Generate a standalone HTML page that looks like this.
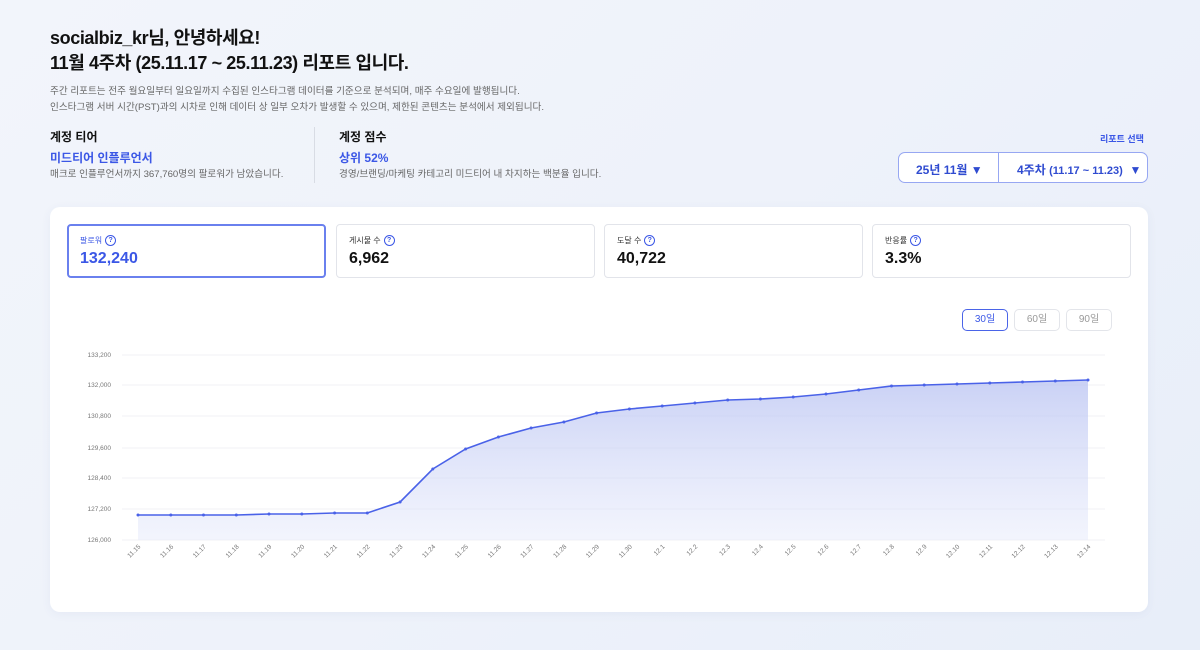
<!DOCTYPE html>
<html><head><meta charset="utf-8"><style>
*{margin:0;padding:0;box-sizing:border-box}
body{width:1200px;height:650px;overflow:hidden;background:linear-gradient(135deg,#f2f5fb 0%,#eef2fa 50%,#e8eef9 100%);font-family:"Liberation Sans","Noto Sans CJK KR",sans-serif;position:relative;color:#111}
.a{position:absolute;white-space:nowrap}
h1{font-size:18px;font-weight:700;line-height:25px;letter-spacing:-0.4px}
.desc{font-size:9.6px;color:#666;line-height:16px}
.lab{font-size:12px;font-weight:700}
.blue{color:#3b57e6}
.card{position:absolute;left:50px;top:207px;width:1098px;height:405px;background:#fff;border-radius:10px;box-shadow:0 2px 10px rgba(60,80,150,0.06)}
.m{position:absolute;top:224px;width:259px;height:54px;border:1px solid #e2e4ea;border-radius:4px;background:#fff}
.m .t{position:absolute;left:12px;top:10px;font-size:8px;color:#333}
.m .q{display:inline-block;width:11px;height:11px;border:1.3px solid #3b57e6;border-radius:50%;font-size:7px;color:#3b57e6;text-align:center;line-height:9px;vertical-align:middle;margin-left:3px;font-weight:700}
.m .v{position:absolute;left:12px;top:25px;font-size:16px;font-weight:700}
.sel{position:absolute;left:898px;top:152px;width:250px;height:31px;border:1px solid #97a7f2;border-radius:7px;background:#fff;font-size:12px;font-weight:700;color:#2f4bd0}
.btn{position:absolute;top:309px;width:46px;height:22px;border:1px solid #e3e5ea;border-radius:5px;font-size:10px;color:#999;text-align:center;line-height:20px;background:#fff}
</style></head><body>
<div class="a" style="left:50px;top:26px"><h1>socialbiz_kr님, 안녕하세요!<br>11월 4주차 (25.11.17 ~ 25.11.23) 리포트 입니다.</h1></div>
<div class="a desc" style="left:50px;top:84px">주간 리포트는 전주 월요일부터 일요일까지 수집된 인스타그램 데이터를 기준으로 분석되며, 매주 수요일에 발행됩니다.<br>인스타그램 서버 시간(PST)과의 시차로 인해 데이터 상 일부 오차가 발생할 수 있으며, 제한된 콘텐츠는 분석에서 제외됩니다.</div>
<div class="a lab" style="left:50px;top:128px">계정 티어</div>
<div class="a lab blue" style="left:50px;top:149px">미드티어 인플루언서</div>
<div class="a desc" style="left:50px;top:167px">매크로 인플루언서까지 367,760명의 팔로워가 남았습니다.</div>
<div class="a" style="left:314px;top:127px;width:1px;height:56px;background:#d8dce4"></div>
<div class="a lab" style="left:339px;top:128px">계정 점수</div>
<div class="a lab blue" style="left:339px;top:149px">상위 52%</div>
<div class="a desc" style="left:339px;top:167px">경영/브랜딩/마케팅 카테고리 미드티어 내 차지하는 백분율 입니다.</div>
<div class="a" style="left:1100px;top:132px;font-size:9px;font-weight:700;color:#3b57e6">리포트 선택</div>
<div class="sel"><span class="a" style="left:17px;top:8px">25년 11월 ▼</span><div class="a" style="left:99px;top:0;width:1px;height:29px;background:#97a7f2"></div><span class="a" style="left:118px;top:8px">4주차 <span style="font-size:11px">(11.17 ~ 11.23)</span> &nbsp;▼</span></div>
<div class="card"></div>
<div class="m" style="left:67px;border:2px solid #6a80ee"><div class="t" style="left:11px;top:9px;color:#3b57e6">팔로워<span class="q">?</span></div><div class="v blue" style="left:11px;top:24px">132,240</div></div>
<div class="m" style="left:336px"><div class="t">게시물 수<span class="q">?</span></div><div class="v">6,962</div></div>
<div class="m" style="left:604px"><div class="t">도달 수<span class="q">?</span></div><div class="v">40,722</div></div>
<div class="m" style="left:872px"><div class="t">반응률<span class="q">?</span></div><div class="v">3.3%</div></div>
<div class="btn" style="left:962px;border:1.5px solid #4a64e8;color:#3b57e6">30일</div>
<div class="btn" style="left:1014px">60일</div>
<div class="btn" style="left:1066px">90일</div>
<svg class="a" style="left:0;top:0" width="1200" height="650">
<defs><linearGradient id="g" x1="0" y1="0" x2="0" y2="1"><stop offset="0" stop-color="#b8c2f2" stop-opacity="0.75"/><stop offset="1" stop-color="#e6eafb" stop-opacity="0.5"/></linearGradient></defs>
<g stroke="#f0f1f4" stroke-width="1">
<line x1="122" y1="355" x2="1105" y2="355"/><line x1="122" y1="385" x2="1105" y2="385"/><line x1="122" y1="416" x2="1105" y2="416"/><line x1="122" y1="448" x2="1105" y2="448"/><line x1="122" y1="478" x2="1105" y2="478"/><line x1="122" y1="509" x2="1105" y2="509"/><line x1="122" y1="540" x2="1105" y2="540"/></g>
<g font-size="6.5" fill="#777" text-anchor="end" font-family="Liberation Sans,sans-serif">
<text x="111" y="357">133,200</text><text x="111" y="387">132,000</text><text x="111" y="418">130,800</text><text x="111" y="450">129,600</text><text x="111" y="480">128,400</text><text x="111" y="511">127,200</text><text x="111" y="542">126,000</text></g>
<path fill="url(#g)" d="M138,515 L170.8,515 203.5,515 236.3,515 269,514 301.8,514 334.6,513 367.3,513 400.1,502 432.8,469 465.6,449 498.4,437 531.1,428 563.9,422 596.6,413 629.4,409 662.2,406 694.9,403 727.7,400 760.4,399 793.2,397 826,394 858.7,390 891.5,386 924.2,385 957,384 989.8,383 1022.5,382 1055.3,381 1088,380 L1088,540 L138,540 Z"/>
<polyline fill="none" stroke="#4a62e8" stroke-width="1.6" points="138,515 170.8,515 203.5,515 236.3,515 269,514 301.8,514 334.6,513 367.3,513 400.1,502 432.8,469 465.6,449 498.4,437 531.1,428 563.9,422 596.6,413 629.4,409 662.2,406 694.9,403 727.7,400 760.4,399 793.2,397 826,394 858.7,390 891.5,386 924.2,385 957,384 989.8,383 1022.5,382 1055.3,381 1088,380"/>
<g fill="#4a62e8"><circle cx="138" cy="515" r="1.5"/><circle cx="170.8" cy="515" r="1.5"/><circle cx="203.5" cy="515" r="1.5"/><circle cx="236.3" cy="515" r="1.5"/><circle cx="269" cy="514" r="1.5"/><circle cx="301.8" cy="514" r="1.5"/><circle cx="334.6" cy="513" r="1.5"/><circle cx="367.3" cy="513" r="1.5"/><circle cx="400.1" cy="502" r="1.5"/><circle cx="432.8" cy="469" r="1.5"/><circle cx="465.6" cy="449" r="1.5"/><circle cx="498.4" cy="437" r="1.5"/><circle cx="531.1" cy="428" r="1.5"/><circle cx="563.9" cy="422" r="1.5"/><circle cx="596.6" cy="413" r="1.5"/><circle cx="629.4" cy="409" r="1.5"/><circle cx="662.2" cy="406" r="1.5"/><circle cx="694.9" cy="403" r="1.5"/><circle cx="727.7" cy="400" r="1.5"/><circle cx="760.4" cy="399" r="1.5"/><circle cx="793.2" cy="397" r="1.5"/><circle cx="826" cy="394" r="1.5"/><circle cx="858.7" cy="390" r="1.5"/><circle cx="891.5" cy="386" r="1.5"/><circle cx="924.2" cy="385" r="1.5"/><circle cx="957" cy="384" r="1.5"/><circle cx="989.8" cy="383" r="1.5"/><circle cx="1022.5" cy="382" r="1.5"/><circle cx="1055.3" cy="381" r="1.5"/><circle cx="1088" cy="380" r="1.5"/></g>
<g font-size="6.5" fill="#777" text-anchor="end" font-family="Liberation Sans,sans-serif">
<text transform="translate(141,547) rotate(-45)">11.15</text><text transform="translate(173.8,547) rotate(-45)">11.16</text><text transform="translate(206.5,547) rotate(-45)">11.17</text><text transform="translate(239.3,547) rotate(-45)">11.18</text><text transform="translate(272,547) rotate(-45)">11.19</text><text transform="translate(304.8,547) rotate(-45)">11.20</text><text transform="translate(337.6,547) rotate(-45)">11.21</text><text transform="translate(370.3,547) rotate(-45)">11.22</text><text transform="translate(403.1,547) rotate(-45)">11.23</text><text transform="translate(435.8,547) rotate(-45)">11.24</text><text transform="translate(468.6,547) rotate(-45)">11.25</text><text transform="translate(501.4,547) rotate(-45)">11.26</text><text transform="translate(534.1,547) rotate(-45)">11.27</text><text transform="translate(566.9,547) rotate(-45)">11.28</text><text transform="translate(599.6,547) rotate(-45)">11.29</text><text transform="translate(632.4,547) rotate(-45)">11.30</text><text transform="translate(665.2,547) rotate(-45)">12.1</text><text transform="translate(697.9,547) rotate(-45)">12.2</text><text transform="translate(730.7,547) rotate(-45)">12.3</text><text transform="translate(763.4,547) rotate(-45)">12.4</text><text transform="translate(796.2,547) rotate(-45)">12.5</text><text transform="translate(829,547) rotate(-45)">12.6</text><text transform="translate(861.7,547) rotate(-45)">12.7</text><text transform="translate(894.5,547) rotate(-45)">12.8</text><text transform="translate(927.2,547) rotate(-45)">12.9</text><text transform="translate(960,547) rotate(-45)">12.10</text><text transform="translate(992.8,547) rotate(-45)">12.11</text><text transform="translate(1025.5,547) rotate(-45)">12.12</text><text transform="translate(1058.3,547) rotate(-45)">12.13</text><text transform="translate(1091,547) rotate(-45)">12.14</text></g>
</svg>
</body></html>
